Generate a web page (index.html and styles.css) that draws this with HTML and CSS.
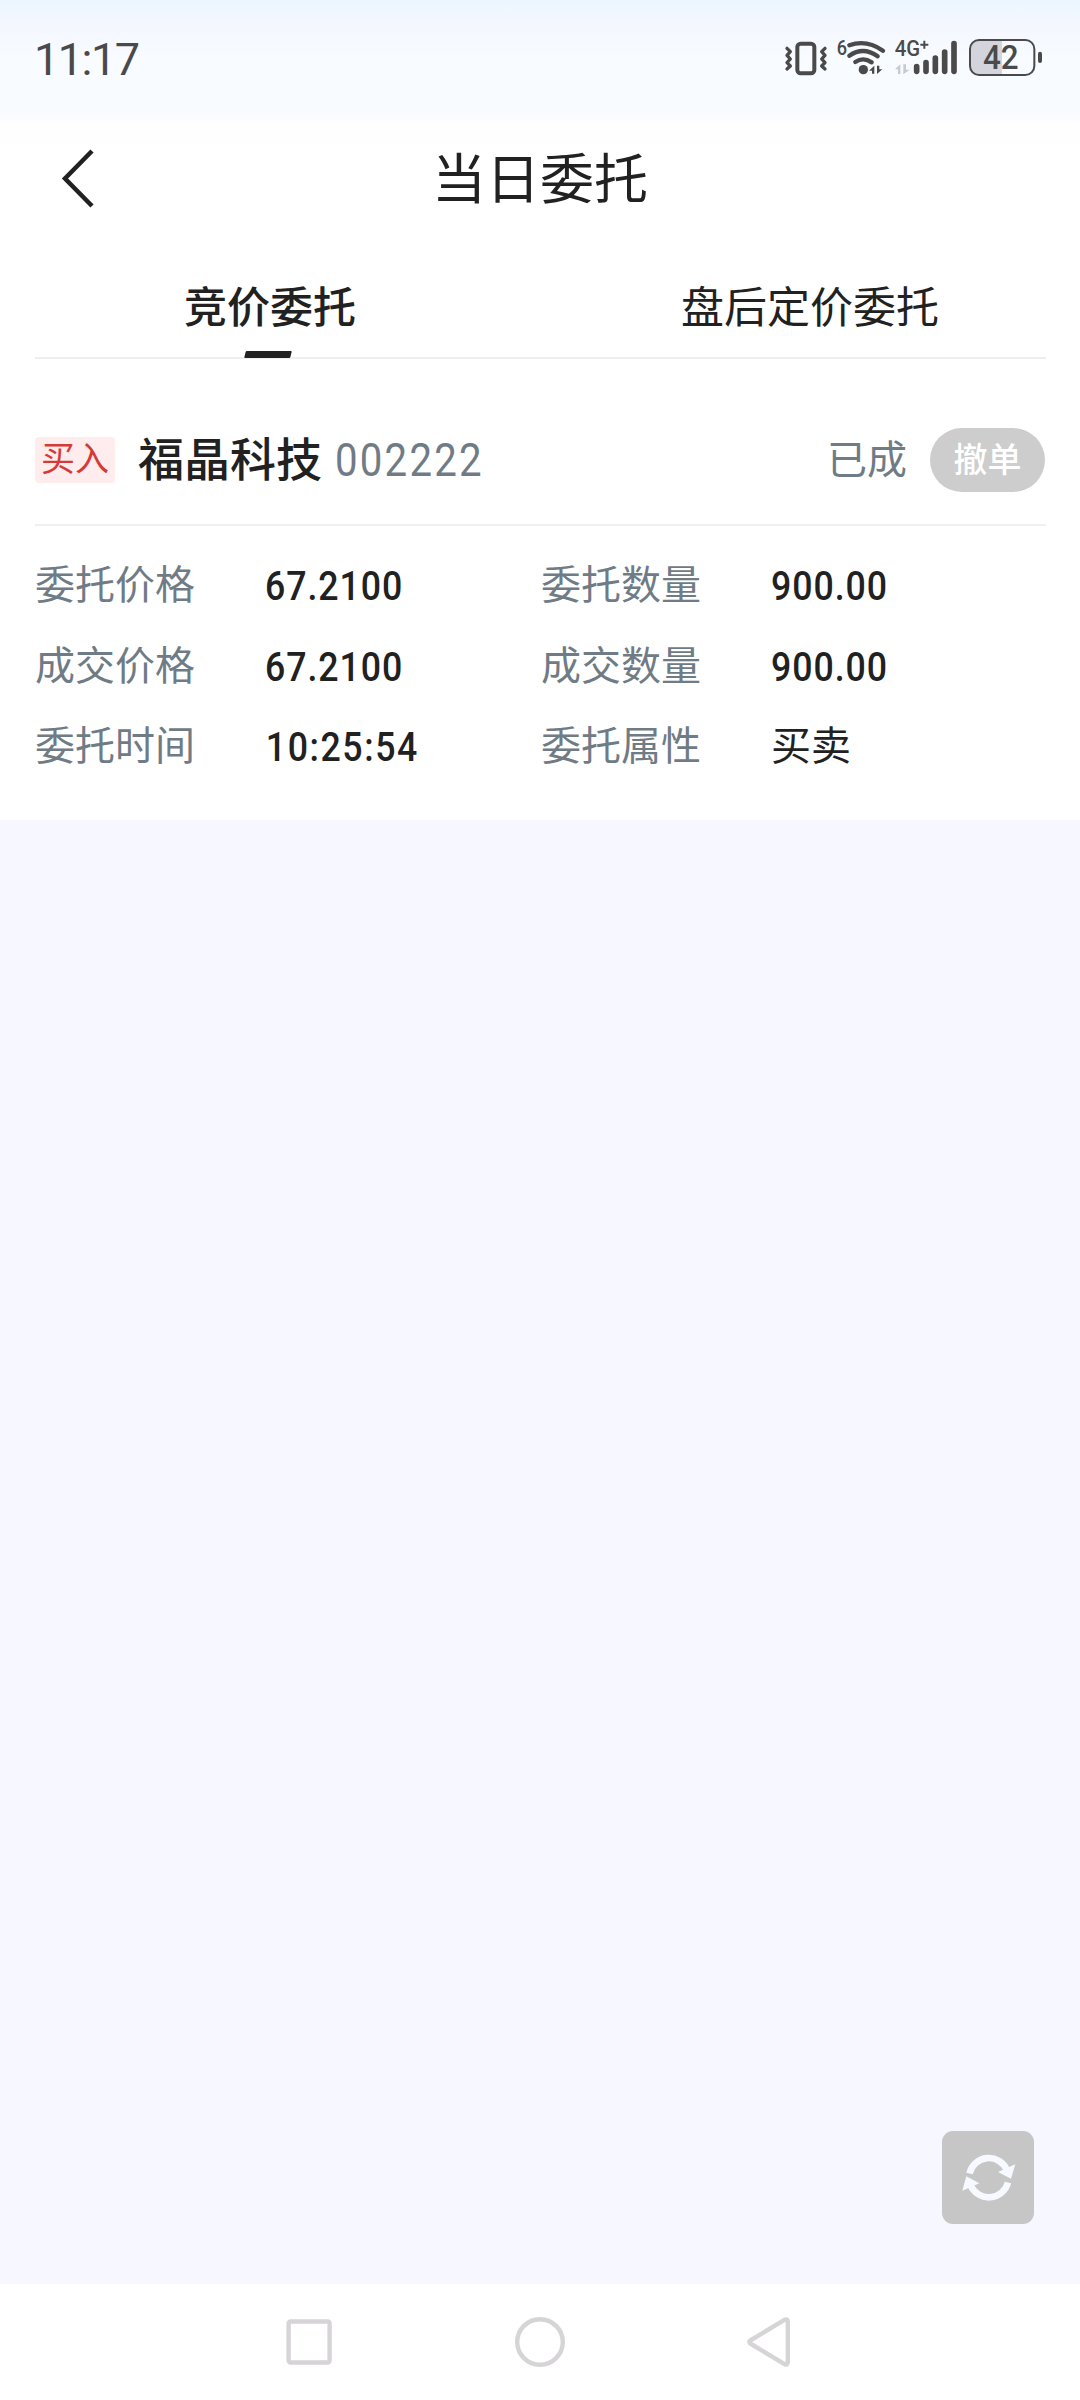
FILE: index.html
```html
<!DOCTYPE html>
<html lang="zh-CN">
<head>
  <meta charset="UTF-8" />
  <meta name="viewport" content="width=device-width, initial-scale=1.0"/>
  <title>当日委托</title>
  <link rel="stylesheet" href="styles.css">
</head>
<body>
  <div class="top">
    <!-- Status bar -->
    <div class="status-bar">
      <span class="clock">11:17</span>
      <svg class="status-icons" viewBox="0 0 870 240">
        <!-- vibrate -->
        <g fill="none" stroke="#4a4a4a" stroke-linejoin="round" stroke-linecap="round">
          <rect x="82" y="71" width="51" height="89" rx="10" stroke-width="12"/>
          <path d="M51 85l10 10-10 11 10 11-10 11 10 10-10 9" stroke-width="10"/>
          <path d="M165 85l-10 10 10 11-10 11 10 11-10 10 10 9" stroke-width="10"/>
        </g>
        <!-- wifi -->
        <text class="net-text" x="200" y="104" font-size="62" textLength="31" lengthAdjust="spacingAndGlyphs">6</text>
        <g fill="none" stroke="#4a4a4a" stroke-width="13" stroke-linecap="round">
          <path d="M238 76Q289 57 339 92"/>
          <path d="M238 107Q280 78 323 109"/>
          <path d="M256 126Q280 110 305 127"/>
        </g>
        <circle cx="280" cy="149" r="14" fill="#4a4a4a"/>
        <path d="M297 152l16-15v24h-7v-9zM337 148l-16 14v-25h7v11z" fill="#4a4a4a"/>
        <!-- mobile signal -->
        <text class="net-text" x="374" y="109" font-size="65" textLength="76" lengthAdjust="spacingAndGlyphs">4G</text>
        <path d="M463 62v24M451 74h24" stroke="#4a4a4a" stroke-width="6"/>
        <path d="M375 148l16-15v29h-7v-14zM419 149l-19 14v-30h8v16z" fill="#c9c9d1"/>
        <g stroke="#4a4a4a" stroke-width="17" stroke-linecap="round">
          <path d="M440 140v14M468 128v26M496 114v40M524 96v58M552 71v83"/>
        </g>
        <!-- battery -->
        <path d="M620 61h76v102h-76q-19-3-19-25v-52q0-22 19-25z" fill="#d4d4dc"/>
        <rect x="600" y="60" width="193" height="105" rx="27" fill="none" stroke="#4a4a4a" stroke-width="6"/>
        <rect x="804" y="95" width="12" height="34" rx="6" fill="#4a4a4a"/>
        <text class="net-text" x="639" y="147" font-size="97" textLength="107" lengthAdjust="spacingAndGlyphs">42</text>
      </svg>
    </div>

    <!-- Title -->
    <div class="title-bar">
      <svg class="back" viewBox="0 0 36 60"><path d="M32 3L5 30.500L32 58" fill="none" stroke="#212121" stroke-width="4.500"/></svg>
      <h1>当日委托</h1>
    </div>

    <!-- Tabs -->
    <div class="tabs">
      <div class="tab active">竞价委托</div>
      <div class="tab">盘后定价委托</div>
    </div>

    <!-- Order -->
    <div class="order">
      <div class="order-head">
        <span class="tag">买入</span>
        <span class="name">福晶科技</span>
        <span class="code">002222</span>
        <span class="state">已成</span>
        <button class="cancel" disabled>撤单</button>
      </div>
      <div class="order-info">
        <span class="label">委托价格</span><span class="value">67.2100</span>
        <span class="label">委托数量</span><span class="value">900.00</span>
        <span class="label">成交价格</span><span class="value">67.2100</span>
        <span class="label">成交数量</span><span class="value">900.00</span>
        <span class="label">委托时间</span><span class="value time">10:25:54</span>
        <span class="label">委托属性</span><span class="value cn">买卖</span>
      </div>
    </div>
  </div>

  <div class="refresh">
    <svg viewBox="0 0 92 93">
      <path d="M27.500 42.500A19.800 19.800 0 0 1 65 39M66 51.500A19.800 19.800 0 0 1 28.500 54" fill="none" stroke="#f6f9ff" stroke-width="6.600"/>
      <path d="M56 41l17.300-7.700L69 47.700zM24.300 45.300l-4 14.400 17-7.400z" fill="#f6f9ff"/>
    </svg>
  </div>

  <!-- System navigation -->
  <div class="nav">
    <svg viewBox="0 0 560 116">
      <g fill="none" stroke="#d6d4d6" stroke-width="4.400" stroke-linejoin="round">
        <rect x="28.600" y="37.500" width="41" height="41" rx="2"/>
        <circle cx="280" cy="58" r="22.800"/>
        <path d="M490.300 56.500L524.500 35.800Q527.800 34.500 527.800 38V78Q527.800 81.500 524.500 80.200L490.300 59.500Q488.300 58 490.300 56.500z"/>
      </g>
    </svg>
  </div>
</body>
</html>
```
FILE: styles.css
```css
* {
  box-sizing: border-box;
}

body {
  margin: 0;
  height: 2400px;
  display: flex;
  flex-direction: column;
  background: #f6f7ff;
  color: #212121;
  font-family: "Noto Sans CJK SC", sans-serif;
}

.top {
  height: 820px;
  background: linear-gradient(#eaf6ff 0, #f5f7ff 24px, #f8fbff 60px, #f8fbff 112px, #fefeff 124px, #fff 160px);
}

.status-bar {
  height: 120px;
  padding: 20px 20px 0 34px;
  display: flex;
  justify-content: space-between;
}

.clock {
  font-family: Roboto, sans-serif;
  font-size: 45px;
  line-height: 79px;
  letter-spacing: -1.5px;
  color: #4a4a4a;
}

.status-icons {
  width: 290px;
  height: 80px;
}

.net-text {
  font-family: Roboto, sans-serif;
  font-weight: 500;
  fill: #4a4a4a;
}

.title-bar {
  height: 116px;
  display: grid;
  grid-template-columns: 120px 1fr 120px;
  align-items: center;
}

.back {
  width: 36px;
  height: 60px;
  margin: 0 0 1px 60px;
}

h1 {
  margin: 0 0 4px;
  text-align: center;
  font-size: 54px;
  font-weight: 400;
  line-height: 80px;
}

.tabs {
  height: 123px;
  display: flex;
  background: linear-gradient(#eee, #eee) 35px 100% / 1011px 2px no-repeat;
}

.tab {
  flex: 1;
  display: flex;
  flex-direction: column;
  align-items: center;
  justify-content: space-between;
  padding-top: 35px;
  font-size: 43px;
  line-height: 66px;
}

.tab.active {
  font-weight: 500;
}

.tab.active::after {
  content: "";
  width: 46px;
  height: 7px;
  margin: 0 4px 1px 0;
  background: #212121;
  border-radius: 1px;
  transform: skewX(-14deg);
}

.order {
  padding: 0 34px 0 35px;
}

.order-head {
  height: 167px;
  padding-top: 36px;
  display: flex;
  align-items: center;
  border-bottom: 2px solid #eff0f1;
}

.tag {
  width: 80px;
  height: 46px;
  border-radius: 4px;
  background: #ffeded;
  color: #d63a38;
  font-size: 34px;
  line-height: 40px;
  text-align: center;
}

.name {
  margin: 0 0 8px 23px;
  font-size: 46px;
  font-weight: 500;
  line-height: 66px;
}

.code {
  margin-left: 13px;
  font-family: Roboto, sans-serif;
  font-size: 47px;
  font-weight: 400;
  letter-spacing: 2.600px;
  color: #6f7b85;
  transform: scaleX(.855);
  transform-origin: 0 50%;
}

.state {
  margin: 0 0 6px auto;
  font-size: 40px;
  line-height: 60px;
  color: #6f7b85;
}

.cancel {
  width: 115px;
  height: 64px;
  margin: 0 1px 0 23px;
  padding: 0 0 5px;
  border: none;
  border-radius: 32px;
  background: #cdcdcd;
  color: #fff;
  font: 500 34px/59px "Noto Sans CJK SC", sans-serif;
}

.order-info {
  padding-top: 16px;
  display: grid;
  grid-template-columns: 230px 276px 230px 1fr;
  grid-auto-rows: 80.500px;
  line-height: 80px;
  font-size: 40px;
}

.label {
  color: #6f7b85;
}

.value {
  padding-top: 4px;
  font-family: Roboto, sans-serif;
  font-size: 41px;
  font-weight: 500;
  letter-spacing: 1.100px;
  transform: scaleX(.87);
  transform-origin: 0 50%;
}

.value.time {
  padding-left: 1px;
  letter-spacing: 1.800px;
}

.value.cn {
  padding-top: 0;
  font-family: "Noto Sans CJK SC", sans-serif;
  font-size: 40px;
  font-weight: 400;
  letter-spacing: 0;
  transform: none;
}

.refresh {
  width: 92px;
  height: 93px;
  margin: auto 46px 60px auto;
  border-radius: 11px;
  background: #c6c6c6;
}

.refresh svg {
  display: block;
}

.nav {
  height: 116px;
  display: flex;
  justify-content: center;
  background: #fff;
}

.nav svg {
  width: 560px;
  height: 116px;
}
```
